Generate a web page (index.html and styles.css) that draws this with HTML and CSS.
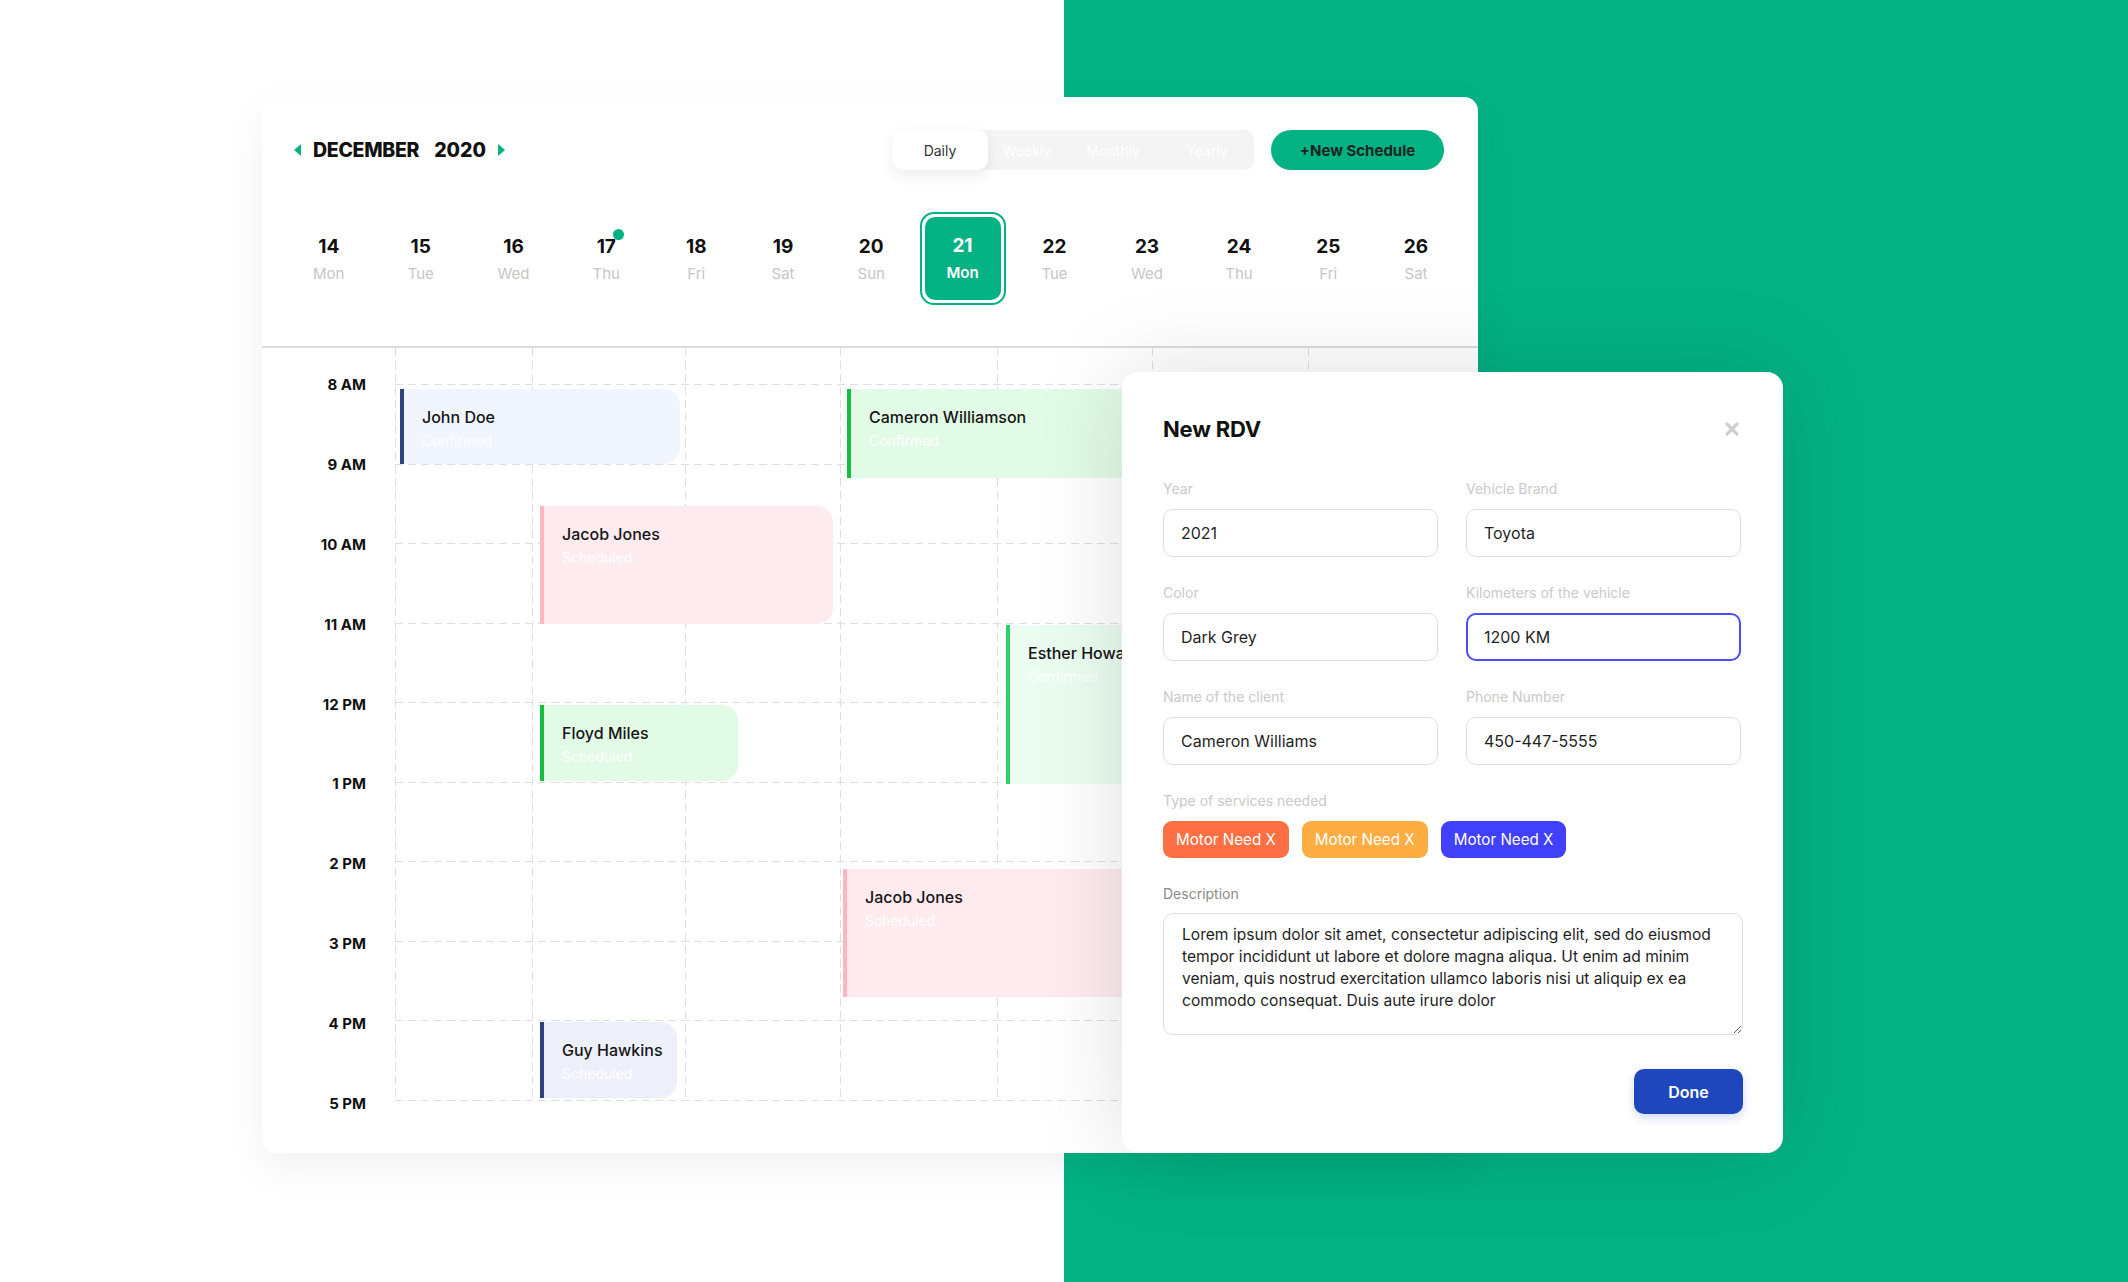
FILE: index.html
```html
<!DOCTYPE html>
<html lang="en">
<head>
  <meta charset="UTF-8">
  <meta name="viewport" content="width=device-width, initial-scale=1.0">
  <title>Schedule</title>
  <link rel="stylesheet" href="styles.css">
</head>
<body>
  <div class="stage">
    <!-- Calendar card -->
    <div class="card">
      <div class="card-head">
        <div class="title-row">
          <div class="month">
            <span class="arrow arrow-left"></span>
            <span class="month-name">DECEMBER</span>
            <span class="month-year">2020</span>
            <span class="arrow arrow-right"></span>
          </div>
          <div class="tabs">
            <span class="tab active">Daily</span>
            <span class="tab tab-w">Weekly</span>
            <span class="tab">Monthly</span>
            <span class="tab">Yearly</span>
          </div>
          <button class="new-btn">+New Schedule</button>
        </div>

        <div class="dates">
          <div class="day"><span class="num">14</span><span class="dname">Mon</span></div>
          <div class="day"><span class="num">15</span><span class="dname">Tue</span></div>
          <div class="day"><span class="num">16</span><span class="dname">Wed</span></div>
          <div class="day"><span class="num dot">17</span><span class="dname">Thu</span></div>
          <div class="day"><span class="num">18</span><span class="dname">Fri</span></div>
          <div class="day"><span class="num">19</span><span class="dname">Sat</span></div>
          <div class="day"><span class="num">20</span><span class="dname">Sun</span></div>
          <div class="day">
            <div class="day-active"><div class="day-fill"><span class="num">21</span><span class="dname">Mon</span></div></div>
          </div>
          <div class="day"><span class="num">22</span><span class="dname">Tue</span></div>
          <div class="day"><span class="num">23</span><span class="dname">Wed</span></div>
          <div class="day"><span class="num">24</span><span class="dname">Thu</span></div>
          <div class="day"><span class="num">25</span><span class="dname">Fri</span></div>
          <div class="day"><span class="num">26</span><span class="dname">Sat</span></div>
        </div>
      </div>

      <div class="schedule">
        <div class="hours">
          <span>8 AM</span><span>9 AM</span><span>10 AM</span><span>11 AM</span><span>12 PM</span>
          <span>1 PM</span><span>2 PM</span><span>3 PM</span><span>4 PM</span><span>5 PM</span>
        </div>
        <div class="board">
          <div class="cols">
            <div class="col"></div><div class="col"></div><div class="col"></div><div class="col"></div>
            <div class="col"></div><div class="col"></div><div class="col"></div><div class="col last"></div>
          </div>
          <div class="rows">
            <div class="hline"></div><div class="hline"></div><div class="hline"></div><div class="hline"></div>
            <div class="hline"></div><div class="hline"></div><div class="hline"></div><div class="hline"></div>
            <div class="hline"></div><div class="hline"></div>
          </div>

          <!-- events, placed by time -->
          <div class="event navy" style="left:5px;top:41px;width:280px;height:75px">
            <div class="name">John Doe</div><div class="status">Confirmed</div>
          </div>
          <div class="event green" style="left:452px;top:41px;width:460px;height:89px">
            <div class="name">Cameron Williamson</div><div class="status">Confirmed</div>
          </div>
          <div class="event pink" style="left:145px;top:158px;width:293px;height:118px">
            <div class="name">Jacob Jones</div><div class="status">Scheduled</div>
          </div>
          <div class="event green light" style="left:611px;top:277px;width:300px;height:159px">
            <div class="name">Esther Howard</div><div class="status">Confirmed</div>
          </div>
          <div class="event green" style="left:145px;top:357px;width:198px;height:76px">
            <div class="name">Floyd Miles</div><div class="status">Scheduled</div>
          </div>
          <div class="event pink" style="left:448px;top:521px;width:450px;height:128px">
            <div class="name">Jacob Jones</div><div class="status">Scheduled</div>
          </div>
          <div class="event navy soft" style="left:145px;top:674px;width:137px;height:76px">
            <div class="name">Guy Hawkins</div><div class="status">Scheduled</div>
          </div>
        </div>
      </div>
    </div>

    <!-- New RDV modal -->
    <div class="modal">
      <div class="modal-head">
        <h2>New RDV</h2>
        <svg class="close" width="14" height="14" viewBox="0 0 14 14">
          <path d="M2 2 L12 12 M12 2 L2 12" stroke="#cfcfcf" stroke-width="3.2" stroke-linecap="round"/>
        </svg>
      </div>

      <div class="fields">
        <div class="field"><label>Year</label><input type="text" value="2021"></div>
        <div class="field"><label>Vehicle Brand</label><input type="text" value="Toyota"></div>
        <div class="field"><label>Color</label><input type="text" value="Dark Grey"></div>
        <div class="field"><label>Kilometers of the vehicle</label><input class="focus" type="text" value="1200 KM"></div>
        <div class="field"><label>Name of the client</label><input type="text" value="Cameron Williams"></div>
        <div class="field"><label>Phone Number</label><input type="text" value="450-447-5555"></div>
      </div>

      <div class="services">
        <label>Type of services needed</label>
        <div class="chips">
          <span class="chip orange">Motor Need X</span>
          <span class="chip amber">Motor Need X</span>
          <span class="chip blue">Motor Need X</span>
        </div>
      </div>

      <div class="desc">
        <label>Description</label>
        <textarea>Lorem ipsum dolor sit amet, consectetur adipiscing elit, sed do eiusmod tempor incididunt ut labore et dolore magna aliqua. Ut enim ad minim veniam, quis nostrud exercitation ullamco laboris nisi ut aliquip ex ea commodo consequat. Duis aute irure dolor</textarea>
      </div>

      <div class="actions">
        <button class="done">Done</button>
      </div>
    </div>
  </div>
</body>
</html>
```

FILE: styles.css
```css
/* Page: white left half, green right half */
body {
  margin: 0;
  font-family: 'Inter', 'Noto Sans', sans-serif;
  color: #111;
  background: linear-gradient(90deg, #fff 0, #fff 1064px, #03b283 1064px);
  overflow: hidden;
}

.stage {
  position: relative;
  box-sizing: border-box;
  width: 2128px;
  height: 1282px;
  padding: 97px 0 0 262px;
}

/* Calendar card */
.card {
  width: 1216px;
  height: 1056px;
  background: #fff;
  border-radius: 14px;
  box-shadow: 0 14px 40px rgba(0, 0, 0, 0.06);
  overflow: hidden;
}

.card-head {
  box-sizing: border-box;
  height: 251px;
  padding-top: 33px;
  border-bottom: 2px solid #dcdcdc;
}

.title-row {
  display: flex;
  align-items: center;
  height: 40px;
  padding: 0 34px 0 32px;
}

.month {
  display: flex;
  align-items: center;
  font-weight: 800;
  font-size: 19.5px;
}

.arrow {
  width: 0;
  height: 0;
  border-top: 6px solid transparent;
  border-bottom: 6px solid transparent;
}

.arrow-left {
  border-right: 7px solid #03b283;
  margin-right: 12px;
}

.arrow-right {
  border-left: 7px solid #03b283;
  margin-left: 12px;
}

.month-name {
  letter-spacing: -0.3px;
}

.month-year {
  margin-left: 15px;
}

.tabs {
  display: flex;
  margin-left: auto;
  height: 40px;
  background: #f4f4f4;
  border-radius: 10px;
}

.tab {
  display: flex;
  align-items: center;
  justify-content: center;
  width: 94px;
  font-size: 14px;
  color: #fff;
  border-radius: 10px;
}

.tab-w {
  width: 78px;
}

.tab.active {
  width: 96px;
  background: #fff;
  color: #333;
  box-shadow: 0 5px 14px rgba(0, 0, 0, 0.08);
}

.new-btn {
  margin-left: 17px;
  width: 173px;
  height: 40px;
  border: none;
  border-radius: 20px;
  background: #03b283;
  color: #1a2620;
  font-family: inherit;
  font-size: 15px;
  font-weight: 700;
}

/* Dates strip */
.dates {
  display: grid;
  grid-template-columns: 91.5px 92.5px 93px 92.5px 87.5px 86px 90.5px 92px 92px 93px 91px 87.5px 88px;
  margin-top: 42px;
  padding-left: 21px;
  height: 93px;
}

.day {
  display: flex;
  flex-direction: column;
  align-items: center;
  justify-content: center;
  padding-top: 4px;
}

.num {
  position: relative;
  font-size: 19px;
  font-weight: 700;
  line-height: 24px;
}

.num.dot::after {
  content: "";
  position: absolute;
  top: -6px;
  right: -8px;
  width: 11px;
  height: 11px;
  border-radius: 50%;
  background: #03b283;
}

.dname {
  margin-top: 3px;
  font-size: 15px;
  line-height: 24px;
  color: #c6c6c6;
}

.day-active {
  box-sizing: border-box;
  width: 86px;
  height: 93px;
  margin-top: -4px;
  padding: 3px;
  border: 2px solid #03b283;
  border-radius: 14px;
}

.day-fill {
  display: flex;
  flex-direction: column;
  align-items: center;
  justify-content: center;
  height: 100%;
  padding-top: 2px;
  box-sizing: border-box;
  background: #03b283;
  border-radius: 10px;
  color: #fff;
}

.day-fill .dname {
  color: #fff;
  font-weight: 600;
}

/* Time grid */
.schedule {
  display: flex;
  height: 805px;
}

.hours {
  display: flex;
  flex-direction: column;
  box-sizing: border-box;
  width: 133px;
  padding: 27px 29px 0 0;
  text-align: right;
}

.hours span {
  height: 79.9px;
  line-height: 20px;
  font-size: 15px;
  font-weight: 700;
  flex-shrink: 0;
}

.board {
  position: relative;
  flex: 1;
  height: 753px;
}

.cols {
  display: grid;
  grid-template-columns: 137px 153px 155px 157px 155px 156px 155px 1fr;
  height: 100%;
}

.col {
  background: repeating-linear-gradient(to bottom, #dedede 0, #dedede 8px, transparent 8px, transparent 13px) left top / 1px 100% no-repeat;
}

.col.last {
  background: none;
}

.rows {
  position: absolute;
  inset: 0;
  display: flex;
  flex-direction: column;
  gap: 78.55px;
  padding-top: 36px;
}

.hline {
  height: 1px;
  flex-shrink: 0;
  background: repeating-linear-gradient(to right, #dedede 0, #dedede 8px, transparent 8px, transparent 13px);
}

/* Appointment blocks */
.event {
  position: absolute;
  box-sizing: border-box;
  padding: 16px 0 0 18px;
  border-left: 4px solid;
  border-radius: 0 16px 16px 0;
  overflow: hidden;
}

.event .name {
  font-size: 16px;
  font-weight: 500;
  line-height: 24px;
  color: #151515;
  white-space: nowrap;
}

.event .status {
  font-size: 14px;
  line-height: 24px;
  color: #fff;
}

.event.navy {
  border-color: #2f4479;
  background: #f0f5fe;
}

.event.navy.soft {
  background: #edf0fb;
}

.event.green {
  border-color: #17bd40;
  background: #e2fbe6;
}

.event.green.light {
  border-color: #2bd165;
  background: #ebfcf0;
}

.event.pink {
  border-color: #ffb6c1;
  background: #fdebef;
}

/* Modal */
.modal {
  position: absolute;
  left: 1122px;
  top: 372px;
  box-sizing: border-box;
  width: 661px;
  height: 781px;
  padding: 43px 40px 0 41px;
  background: #fff;
  border-radius: 16px;
  box-shadow: 0 0 90px rgba(0, 0, 0, 0.13);
}

.modal-head {
  display: flex;
  align-items: center;
  justify-content: space-between;
  height: 28px;
}

.modal-head h2 {
  margin: 0;
  font-size: 22px;
  font-weight: 700;
  letter-spacing: -0.2px;
}

.close {
  margin-right: 4px;
}

.fields {
  display: grid;
  grid-template-columns: 275px 275px;
  column-gap: 28px;
  row-gap: 26px;
  margin-top: 36px;
}

.field,
.services,
.desc {
  display: flex;
  flex-direction: column;
}

label {
  font-size: 14px;
  line-height: 20px;
  color: #c9c9c9;
  margin-bottom: 10px;
}

input {
  box-sizing: border-box;
  height: 48px;
  padding: 0 17px;
  border: 1px solid #dedede;
  border-radius: 10px;
  font-family: inherit;
  font-size: 16px;
  color: #1f1f1f;
  outline: none;
}

input.focus {
  border: 2px solid #4b4ef5;
  padding-left: 16px;
}

.services {
  margin-top: 26px;
}

.chips {
  display: flex;
  gap: 13px;
}

.chip {
  display: flex;
  align-items: center;
  height: 37px;
  padding: 0 13px;
  border-radius: 9px;
  font-size: 15.2px;
  color: #fff;
}

.chip.orange { background: #fe7044; }
.chip.amber { background: #ffac43; }
.chip.blue { background: #4040fd; }

.desc {
  margin-top: 26px;
}

.desc label {
  color: #8b8b8b;
  margin-bottom: 9px;
}

textarea {
  box-sizing: border-box;
  width: 580px;
  height: 122px;
  padding: 10px 18px;
  border: 1px solid #dedede;
  border-radius: 10px;
  font-family: inherit;
  font-size: 15.6px;
  line-height: 22px;
  color: #1f1f1f;
  outline: none;
}

.actions {
  display: flex;
  justify-content: flex-end;
  width: 580px;
  margin-top: 34px;
}

.done {
  width: 109px;
  height: 45px;
  border: none;
  border-radius: 10px;
  background: #1e47bd;
  color: #fff;
  font-family: inherit;
  font-size: 16px;
  font-weight: 600;
  box-shadow: 0 4px 10px rgba(30, 71, 189, 0.2);
}
```
